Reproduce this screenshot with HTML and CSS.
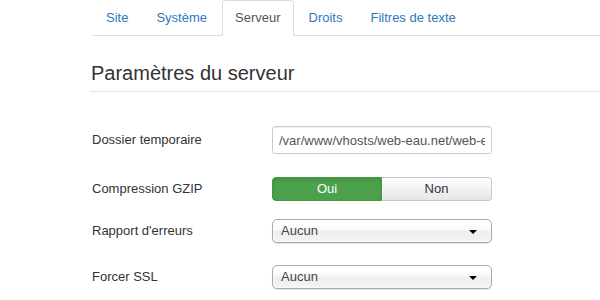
FILE: index.html
```html
<!DOCTYPE html>
<html lang="fr">
<head>
    <meta charset="UTF-8">
    <title>Configuration globale - Serveur</title>
    <link rel="stylesheet" href="styles.css">
</head>
<body>
    <div class="page">
        <ul class="nav-tabs">
            <li><a href="#">Site</a></li>
            <li><a href="#">Système</a></li>
            <li class="active"><a href="#">Serveur</a></li>
            <li><a href="#">Droits</a></li>
            <li><a href="#">Filtres de texte</a></li>
        </ul>

        <div class="tab-pane">
            <h2 class="legend">Paramètres du serveur</h2>

            <div class="control-group">
                <label class="control-label">Dossier temporaire</label>
                <div class="controls">
                    <input class="input-text" type="text" value="/var/www/vhosts/web-eau.net/web-eau.net/tmp">
                </div>
            </div>

            <div class="control-group radio-row">
                <label class="control-label">Compression GZIP</label>
                <div class="controls">
                    <div class="btn-group">
                        <span class="btn btn-success">Oui</span>
                        <span class="btn">Non</span>
                    </div>
                </div>
            </div>

            <div class="control-group">
                <label class="control-label">Rapport d'erreurs</label>
                <div class="controls">
                    <div class="chzn-single">
                        <span>Aucun</span>
                        <b class="caret"></b>
                    </div>
                </div>
            </div>

            <div class="control-group last-row">
                <label class="control-label">Forcer SSL</label>
                <div class="controls">
                    <div class="chzn-single">
                        <span>Aucun</span>
                        <b class="caret"></b>
                    </div>
                </div>
            </div>
        </div>
    </div>
</body>
</html>
```

FILE: styles.css
```css
body {
    margin: 0;
    font-family: "Liberation Sans", Arial, sans-serif;
    font-size: 13px;
    line-height: 18px;
    color: #333;
    background: #fff;
    overflow: hidden;
}
.page {
    padding-left: 92px;
}
.nav-tabs {
    list-style: none;
    margin: 0;
    padding: 0 0 0 1px;
    display: flex;
    border-bottom: 1px solid #ddd;
}
.nav-tabs li {
    margin-right: 2px;
    margin-bottom: -1px;
}
.nav-tabs a {
    display: block;
    padding: 8px 12px;
    color: #2f78bd;
    text-decoration: none;
    border: 1px solid transparent;
    border-radius: 4px 4px 0 0;
}
.nav-tabs .active a {
    color: #555;
    background: #fff;
    border-color: #ddd #ddd transparent;
}
.tab-pane {
    padding-top: 19px;
}
.legend {
    margin: 0 0 34px -2px;
    padding-left: 1px;
    font-size: 20px;
    font-weight: normal;
    line-height: 36px;
    color: #333;
    border-bottom: 1px solid #e5e5e5;
}
.control-group {
    display: flex;
    align-items: center;
    margin-bottom: 18px;
}
.radio-row {
    padding-top: 5px;
}
.last-row {
    padding-top: 4px;
}
.control-label {
    width: 180px;
    flex: none;
}
.input-text {
    box-sizing: border-box;
    width: 220px;
    height: 28px;
    padding: 4px 6px;
    font-family: inherit;
    font-size: 13px;
    color: #555;
    border: 1px solid #ccc;
    border-radius: 3px;
    box-shadow: inset 0 1px 1px rgba(0,0,0,0.075);
}
.btn-group {
    display: flex;
    width: 220px;
}
.btn {
    box-sizing: border-box;
    flex: 1;
    height: 24px;
    line-height: 22px;
    text-align: center;
    color: #333;
    border: 1px solid #c8c8c8;
    background: linear-gradient(#fff, #e6e6e6);
}
.btn:first-child {
    border-radius: 4px 0 0 4px;
}
.btn:last-child {
    border-left: none;
    border-radius: 0 4px 4px 0;
}
.btn-success {
    flex: none;
    width: 110px;
    color: #fff;
    background: #4ca24c;
    border-color: #449644;
    box-shadow: inset 0 2px 4px rgba(0,0,0,0.1);
}
.chzn-single {
    box-sizing: border-box;
    width: 220px;
    height: 24px;
    padding: 0 0 0 8px;
    display: flex;
    align-items: center;
    justify-content: space-between;
    color: #444;
    border: 1px solid #aaa;
    border-radius: 5px;
    background: linear-gradient(#fff 20%, #f6f6f6 50%, #eee 52%, #f4f4f4);
    box-shadow: 0 0 3px #fff inset, 0 1px 1px rgba(0,0,0,0.1);
}
.caret {
    width: 0;
    height: 0;
    margin-right: 14px;
    margin-top: 2px;
    border-top: 4px solid #000;
    border-left: 4px solid transparent;
    border-right: 4px solid transparent;
}
```
